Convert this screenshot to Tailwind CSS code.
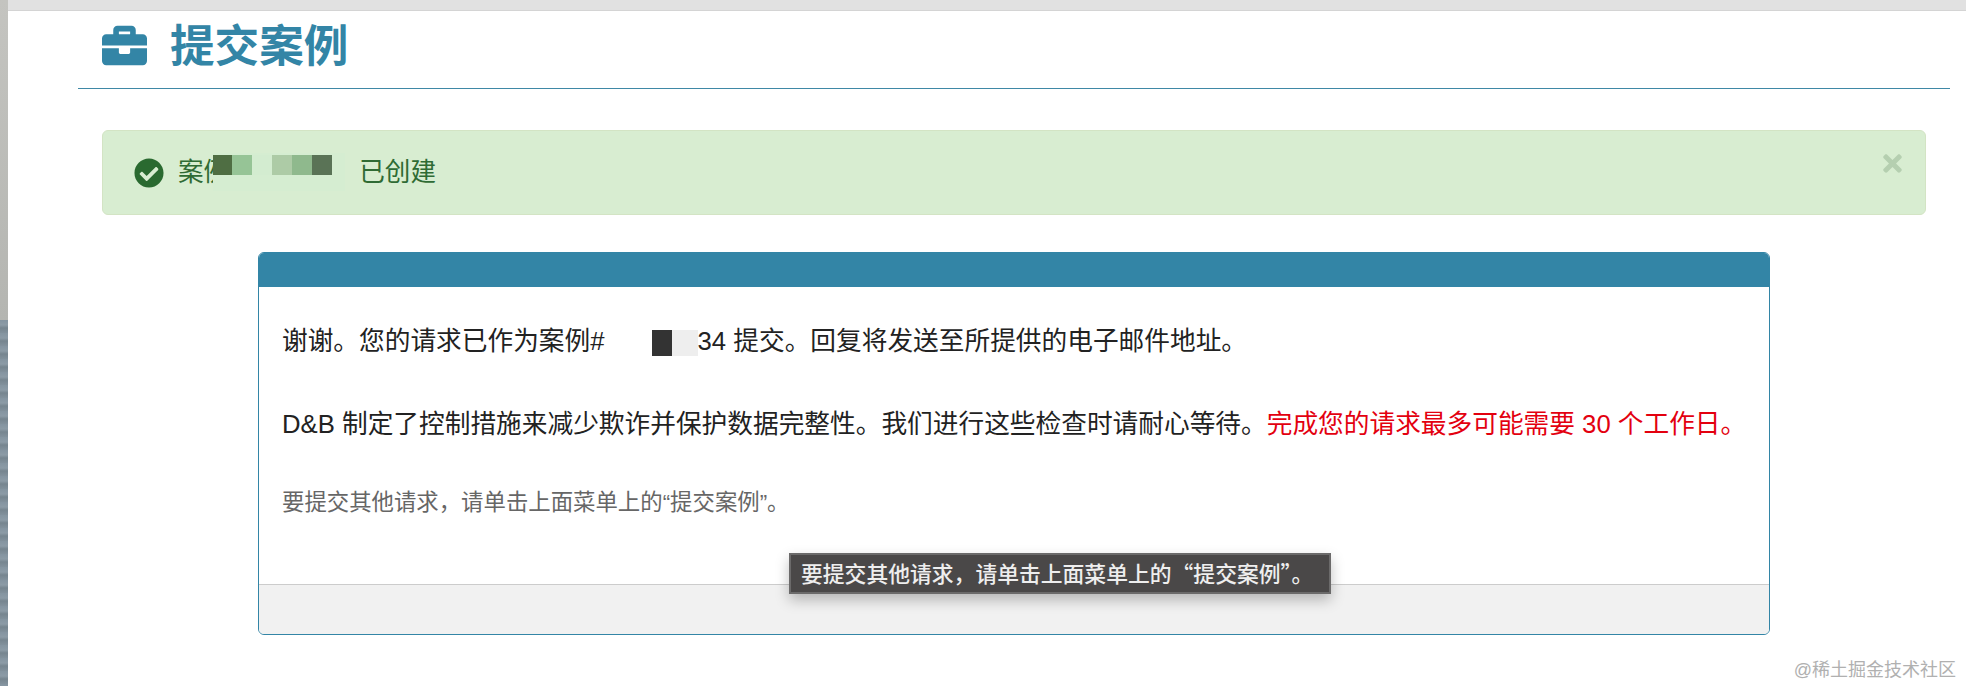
<!DOCTYPE html>
<html lang="zh-CN">
<head>
    <meta charset="UTF-8">
    <meta name="viewport" content="width=device-width, initial-scale=1.0">
    <title>提交案例</title>
    <script src="https://cdn.jsdelivr.net/npm/@tailwindcss/browser@4"></script>
</head>
<body class="bg-white">
    <div class="relative flex h-[686px] overflow-hidden font-['Liberation_Sans','Noto_Sans_CJK_SC',sans-serif]">
        <!-- Desktop strip on the left -->
        <div class="flex w-[8px] shrink-0 flex-col">
            <div class="h-[320px] bg-gradient-to-b from-[#c4c4c0] to-[#b4b5b1]"></div>
            <div class="flex-1 bg-[repeating-linear-gradient(180deg,#8494a0_0px,#8c9ba6_5px,#76858f_8px,#82919c_13px)]"></div>
        </div>

        <div class="min-w-0 flex-1">
            <div class="h-[11px] border-b border-[#d4d4d4] bg-[#e1e1e1]"></div>

            <div class="pl-[70px] pr-[16px]">
                <!-- Page title -->
                <div class="flex h-[78px] items-start gap-[23px] border-b border-[#3f88a6] pl-[24px] pt-[11px]">
                    <svg class="mt-[1px] h-[45px] w-[45px]" viewBox="0 0 512 512" fill="#3385a6"><path d="M320 336c0 8.84-7.16 16-16 16h-96c-8.84 0-16-7.16-16-16v-48H0v144c0 25.6 22.4 48 48 48h416c25.6 0 48-22.4 48-48V288H320v48zm144-208h-80V80c0-25.6-22.4-48-48-48H176c-25.6 0-48 22.4-48 48v48H48c-25.6 0-48 22.4-48 48v80h512v-80c0-25.6-22.4-48-48-48zm-144 0H192V96h128v32z"/></svg>
                    <h1 class="text-[44.6px] leading-[50px] font-bold text-[#3385a6]">提交案例</h1>
                </div>

                <div class="mx-[24px]">
                    <!-- Success alert -->
                    <div class="relative mt-[41px] flex h-[85px] items-center rounded-[6px] border border-[#d3e4c4] bg-[#d8edd1] pl-[31px] text-[25.6px] text-[#2f6b34]">
                        <svg class="h-[30px] w-[30px]" viewBox="0 0 512 512" fill="#2a6a30"><path d="M504 256c0 136.967-111.033 248-248 248S8 392.967 8 256 119.033 8 256 8s248 111.033 248 248zM227.314 387.314l184-184c6.248-6.248 6.248-16.379 0-22.627l-22.627-22.627c-6.248-6.249-16.379-6.249-22.628 0L216 308.118l-70.059-70.059c-6.248-6.248-16.379-6.248-22.628 0l-22.627 22.627c-6.248 6.248-6.248 16.379 0 22.627l104 104c6.249 6.249 16.379 6.249 22.628.001z"/></svg>
                        <span class="ml-[14px]">案例</span>
                        <span class="w-[130px]"></span>
                        <span>已创建</span>

                        <!-- Blurred case number -->
                        <div class="absolute left-[110px] top-[22px] flex h-[38px] w-[132px] items-start bg-[#d5edd1] pt-[2px]">
                            <div class="h-[20px] w-[19px] bg-[#4f6e43]"></div>
                            <div class="h-[20px] w-[20px] bg-[#96c496]"></div>
                            <div class="h-[20px] w-[20px] bg-[#d3ecd0]"></div>
                            <div class="h-[20px] w-[20px] bg-[#adcba6]"></div>
                            <div class="h-[20px] w-[20px] bg-[#8fb98d]"></div>
                            <div class="h-[20px] w-[20px] bg-[#5a7356]"></div>
                        </div>

                        <svg class="absolute right-[23px] top-[19px] h-[27px] w-[19px]" viewBox="0 0 352 512" fill="#b5cfb0"><path d="M242.72 256l100.07-100.07c12.28-12.28 12.28-32.19 0-44.48l-22.24-22.24c-12.28-12.28-32.19-12.28-44.48 0L176 189.28 75.93 89.21c-12.28-12.28-32.19-12.28-44.48 0L9.21 111.45c-12.28 12.28-12.28 32.19 0 44.48L109.28 256 9.21 356.07c-12.28 12.28-12.28 32.19 0 44.48l22.24 22.24c12.28 12.28 32.2 12.28 44.48 0L176 322.72l100.07 100.07c12.28 12.28 32.2 12.28 44.48 0l22.24-22.24c12.28-12.28 12.28-32.19 0-44.48L242.72 256z"/></svg>
                    </div>

                    <!-- Confirmation panel -->
                    <div class="mx-[156px] mt-[37px] flex h-[383px] flex-col overflow-hidden rounded-[6px] border border-[#3385a6]">
                        <div class="h-[34px] bg-[#3385a6]"></div>
                        <div class="flex-1 px-[23px] pt-[36px] text-[25.7px] leading-[36px] whitespace-nowrap text-[#222]">
                            <p>谢谢。您的请求已作为案例#<span class="inline-flex h-[26px] w-[93px] translate-y-[6px] justify-end"><span class="w-[20px] bg-[#333]"></span><span class="w-[26px] bg-[#eeeeee]"></span></span>34 提交。回复将发送至所提供的电子邮件地址。</p>
                            <p class="mt-[47px]">D&amp;B 制定了控制措施来减少欺诈并保护数据完整性。我们进行这些检查时请耐心等待。<span class="text-[#e3000f]">完成您的请求最多可能需要 30 个工作日。</span></p>
                            <p class="mt-[46px] text-[22.4px] leading-[30px] text-[#666]">要提交其他请求，请单击上面菜单上的“提交案例”。</p>
                        </div>
                        <div class="h-[50px] border-t border-[#cccccc] bg-[#f1f1f1]"></div>
                    </div>
                </div>
            </div>
        </div>

        <!-- Tooltip -->
        <div class="absolute left-[789px] top-[553px] flex h-[41px] w-[542px] items-center border-2 border-[#6b6a6a] bg-[#4a4848] pl-[10px] font-['Noto_Sans_CJK_SC','Liberation_Sans',sans-serif] text-[21.8px] font-medium whitespace-nowrap text-[#eeeeee] shadow-[0_6px_14px_rgba(0,0,0,0.25)]">要提交其他请求，请单击上面菜单上的“提交案例”。</div>

        <!-- Watermark -->
        <div class="absolute right-[10px] top-[658px] text-[18px] leading-[24px] text-[#b0b0b0]">@稀土掘金技术社区</div>
    </div>
</body>
</html>
